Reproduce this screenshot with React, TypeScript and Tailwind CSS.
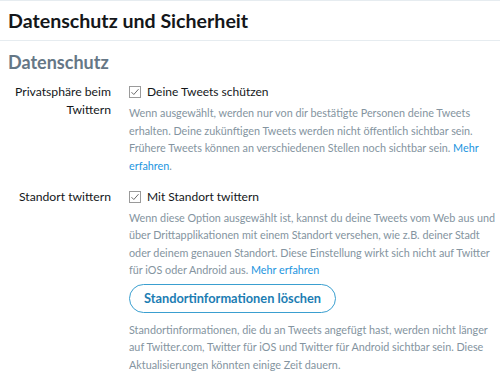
import React from "react";

function CheckBox() {
  return (
    <svg width="12" height="12" viewBox="0 0 12 12" className="shrink-0">
      <rect x="0.5" y="0.5" width="11" height="11" fill="white" stroke="#9a9a9a" />
      <path d="M2.5 6.2 L4.8 8.5 L9.5 3.2" fill="none" stroke="#6b6b6b" strokeWidth="1" />
    </svg>
  );
}

export default function App() {
  return (
    <div className="w-[500px] h-[380px] bg-white overflow-hidden text-[#14171a]" style={{ fontFamily: "Lato, sans-serif" }}>
      <header className="border-t border-b border-[#e6ecf0] h-[41px] flex items-center px-[8px]">
        <h1 className="text-[19.6px] font-bold leading-none">Datenschutz und Sicherheit</h1>
      </header>
      <main className="px-[8px] pt-[10px]">
        <h2 className="text-[18px] font-bold text-[#657786] leading-[22px]">Datenschutz</h2>
        <div className="grid grid-cols-[103px_1fr] gap-x-[18px] mt-[10px] text-[12.2px] leading-[18px]">
          <div className="text-right whitespace-nowrap">Privatsphäre beim<br />Twittern</div>
          <div>
            <label className="flex items-center gap-[6px] text-[12px]">
              <CheckBox />
              <span>Deine Tweets schützen</span>
            </label>
            <p className="text-[10.8px] leading-[17.7px] text-[#8494a0] mt-[3px] whitespace-nowrap">
              Wenn ausgewählt, werden nur von dir bestätigte Personen deine Tweets<br />
              erhalten. Deine zukünftigen Tweets werden nicht öffentlich sichtbar sein.<br />
              Frühere Tweets können an verschiedenen Stellen noch sichtbar sein. <a className="text-[#1b95e0]">Mehr</a><br />
              <a className="text-[#1b95e0]">erfahren</a>.
            </p>
          </div>

          <div className="text-right mt-[13px]">Standort twittern</div>
          <div className="mt-[13px]">
            <label className="flex items-center gap-[6px] text-[12px]">
              <CheckBox />
              <span>Mit Standort twittern</span>
            </label>
            <p className="text-[10.8px] leading-[17.5px] text-[#8494a0] mt-[3px] whitespace-nowrap">
              Wenn diese Option ausgewählt ist, kannst du deine Tweets vom Web aus und<br />
              über Drittapplikationen mit einem Standort versehen, wie z.B. deiner Stadt<br />
              oder deinem genauen Standort. Diese Einstellung wirkt sich nicht auf Twitter<br />
              für iOS oder Android aus. <a className="text-[#1b95e0]">Mehr erfahren</a>
            </p>
            <button className="mt-[5px] h-[29px] w-[207px] rounded-full border border-[#3a9fd0] text-[#1c7db3] font-bold text-[12.8px]">
              Standortinformationen löschen
            </button>
            <p className="text-[10.8px] leading-[17.5px] text-[#8494a0] mt-[8px] whitespace-nowrap">
              Standortinformationen, die du an Tweets angefügt hast, werden nicht länger<br />
              auf Twitter.com, Twitter für iOS und Twitter für Android sichtbar sein. Diese<br />
              Aktualisierungen könnten einige Zeit dauern.
            </p>
          </div>
        </div>
      </main>
    </div>
  );
}
